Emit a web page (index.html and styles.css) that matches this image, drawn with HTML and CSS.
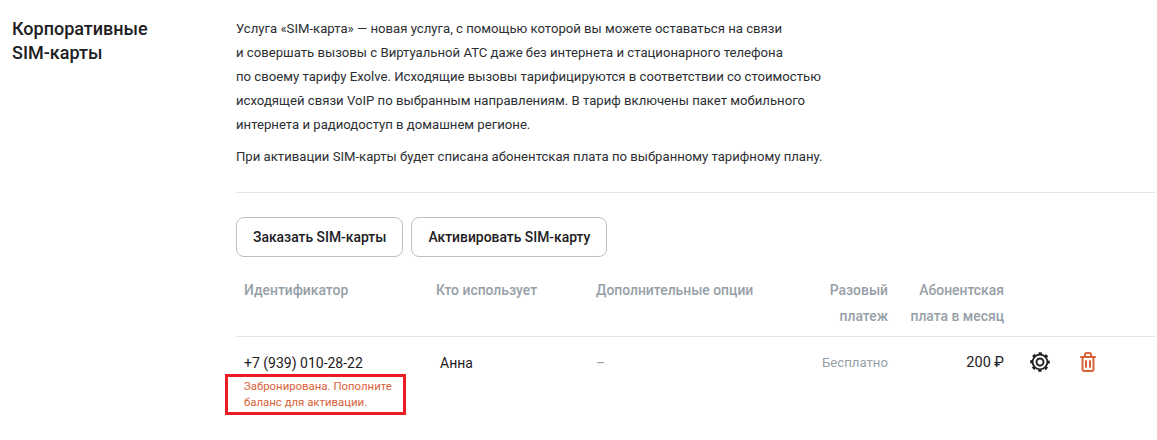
FILE: index.html
```html
<!DOCTYPE html>
<html lang="en">
<head>
    <meta charset="UTF-8">
    <title>Корпоративные SIM-карты</title>
    <link rel="stylesheet" href="styles.css">
</head>
<body>
    <div class="section">
        <h2 class="section-title">Корпоративные<br>SIM-карты</h2>
        <div class="section-body">
            <div class="about">
                <p>Услуга «SIM-карта» — новая услуга, с помощью которой вы можете оставаться на связи<br>
                и совершать вызовы с Виртуальной АТС даже без интернета и стационарного телефона<br>
                по своему тарифу Exolve. Исходящие вызовы тарифицируются в соответствии со стоимостью<br>
                исходящей связи VoIP по выбранным направлениям. В тариф включены пакет мобильного<br>
                интернета и радиодоступ в домашнем регионе.</p>
                <p>При активации SIM-карты будет списана абонентская плата по выбранному тарифному плану.</p>
            </div>

            <div class="actions">
                <button class="button">Заказать SIM-карты</button>
                <button class="button">Активировать SIM-карту</button>
            </div>

            <div class="row head">
                <div class="cell-id">Идентификатор</div>
                <div class="cell-user">Кто использует</div>
                <div class="cell-options">Дополнительные опции</div>
                <div class="cell-once">Разовый платеж</div>
                <div class="cell-monthly">Абонентская плата в месяц</div>
            </div>

            <div class="row item">
                <div class="cell-id">
                    <div class="phone">+7 (939) 010-28-22</div>
                    <div class="note">Забронирована. Пополните баланс для активации.</div>
                </div>
                <div class="cell-user name">Анна</div>
                <div class="cell-options dash">–</div>
                <div class="cell-once muted">Бесплатно</div>
                <div class="cell-monthly price">200 ₽</div>
                <div class="cell-icons">
                    <svg class="icon" viewBox="0 0 20 20" fill="none" stroke="#1d2023">
                        <circle cx="10" cy="10" r="3.5" stroke-width="1.9"/>
                        <circle cx="10" cy="10" r="7.4" stroke-width="1.8"/>
                        <circle cx="10" cy="10" r="8.9" stroke-width="1.8" stroke-dasharray="3.4 3.590" stroke-dashoffset="1.7"/>
                    </svg>
                    <svg class="icon trash" viewBox="0 0 16 20" fill="none" stroke="#d9623a" stroke-width="2" stroke-linecap="round" stroke-linejoin="round">
                        <path d="M1 5h14"/>
                        <path d="M5 5V2.500C5 1.600 5.600 1 6.500 1h3c.9 0 1.500.6 1.500 1.500V5"/>
                        <path d="M2.500 5v12c0 1.200.8 2 2 2h7c1.200 0 2-.8 2-2V5"/>
                        <path d="M6 9v6"/>
                        <path d="M10 9v6"/>
                    </svg>
                </div>
            </div>
        </div>
    </div>
</body>
</html>
```

FILE: styles.css
```css
body {
    font-family: Roboto, "Liberation Sans", sans-serif;
    margin: 0;
    padding: 0;
    background-color: white;
    color: #1d2023;
}
.section {
    display: flex;
    padding: 17px 2px 0 12px;
}
.section-title {
    width: 224px;
    flex: none;
    margin: 0;
    font-size: 18px;
    font-weight: 500;
    line-height: 24px;
}
.section-body {
    flex: 1;
}
.about {
    font-size: 13.15px;
    line-height: 24px;
    color: #2c2f33;
    padding-bottom: 23px;
    border-bottom: 1px solid #e2e2ea;
}
.about p {
    margin: 0 0 8px;
}
.about p:last-child {
    margin-bottom: 0;
}
.actions {
    display: flex;
    gap: 8px;
    margin-top: 24px;
}
.button {
    height: 40px;
    padding: 0 16px;
    background-color: white;
    border: 1px solid #bcbfc5;
    border-radius: 8px;
    font-family: inherit;
    font-size: 13.9px;
    font-weight: 500;
    color: #1d2023;
}
.row {
    display: flex;
    font-size: 14px;
}
.head {
    margin-top: 21px;
    padding-bottom: 7px;
    line-height: 25.500px;
    font-size: 13.9px;
    font-weight: 500;
    color: #969fa8;
    border-bottom: 1px solid #e2e2ea;
}
.cell-id {
    width: 200px;
    flex: none;
    padding-left: 8px;
    box-sizing: border-box;
}
.cell-user {
    width: 152px;
    flex: none;
}
.cell-options {
    width: 200px;
    flex: none;
    padding-left: 8px;
    box-sizing: border-box;
}
.cell-once {
    width: 100px;
    flex: none;
    text-align: right;
    box-sizing: border-box;
}
.cell-monthly {
    width: 116px;
    flex: none;
    text-align: right;
}
.item {
    padding-top: 16px;
    line-height: 20px;
}
.phone {
    color: #1d2023;
}
.note {
    width: 181px;
    box-sizing: border-box;
    margin: 1px 0 0 -19px;
    padding: 1px 6px 2px 16px;
    border: 3px solid #ed1c24;
    font-size: 11.4px;
    line-height: 16px;
    color: #d9623a;
}
.name {
    padding-left: 4px;
    box-sizing: border-box;
}
.muted {
    color: #969fa8;
    font-size: 13.2px;
}
.dash {
    color: #969fa8;
    font-size: 14px;
}
.price {
    font-size: 14.500px;
}
.cell-icons {
    display: flex;
    gap: 30px;
    margin-left: 26px;
    margin-top: -1px;
}
.icon {
    width: 20px;
    height: 20px;
}
.trash {
    width: 16px;
}
```
